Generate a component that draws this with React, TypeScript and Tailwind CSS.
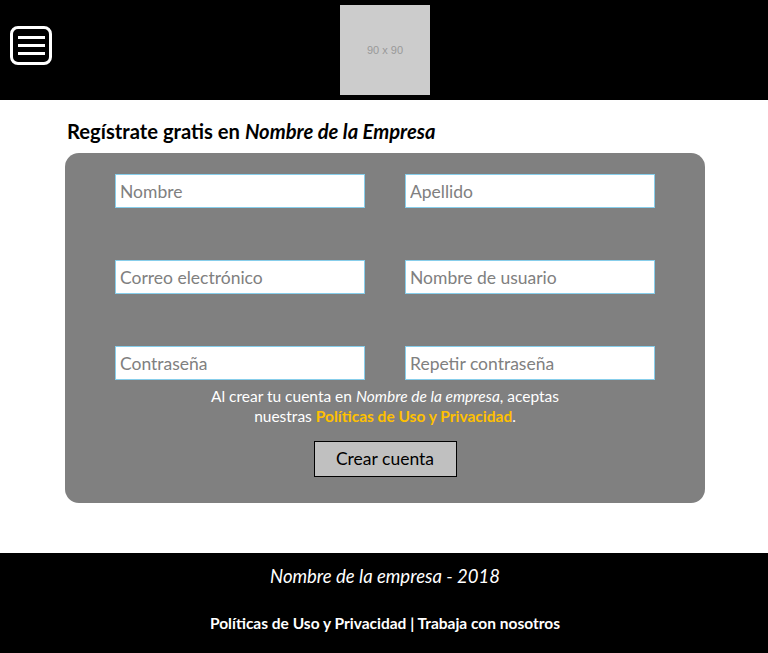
const fields = [
  ["Nombre", "Apellido"],
  ["Correo electrónico", "Nombre de usuario"],
  ["Contraseña", "Repetir contraseña"],
];

function MenuIcon() {
  return (
    <div className="flex h-[39px] w-[42px] flex-col items-center justify-center gap-[5px] rounded-[8px] border-[3px] border-white">
      <span className="block h-[3px] w-[27px] bg-white" />
      <span className="block h-[3px] w-[27px] bg-white" />
      <span className="block h-[3px] w-[27px] bg-white" />
    </div>
  );
}

export default function App() {
  return (
    <div className="min-h-[653px] bg-white font-['Lato',sans-serif]">
      {/* header */}
      <header className="relative flex h-[100px] items-center justify-center bg-black pl-[2px]">
        <div className="absolute left-[10px] top-[26px]">
          <MenuIcon />
        </div>
        <div className="flex h-[90px] w-[90px] items-center justify-center bg-[#cccccc] font-['Liberation_Sans',sans-serif] text-[11px] text-[#999999]">
          90 x 90
        </div>
      </header>

      {/* form */}
      <main className="pb-[50px] pl-[65px] pt-[19px]">
        <h1 className="mb-[10px] pl-[2px] text-[20.2px] font-bold leading-[24px] text-black">
          Regístrate gratis en <em>Nombre de la Empresa</em>
        </h1>
        <div className="flex w-[640px] flex-col items-center rounded-[14px] bg-[#808080] pb-[25px] pt-[21px]">
          <div className="grid grid-cols-2 gap-x-[40px] gap-y-[52px]">
            {fields.flat().map((f) => (
              <input
                key={f}
                placeholder={f}
                className="h-[34px] w-[250px] border border-[#87ceeb] bg-white px-[4px] text-[17.5px] text-black placeholder:text-[#808080] focus:outline-none"
              />
            ))}
          </div>
          <p className="mt-[6px] text-center text-[15.5px] leading-[20px] text-white">
            Al crear tu cuenta en <em>Nombre de la empresa</em>, aceptas
            <br />
            nuestras <span className="font-bold text-[#ffc000]">Políticas de Uso y Privacidad</span>.
          </p>
          <button className="mb-[1px] mt-[15px] h-[36px] w-[143px] border border-black bg-[#c0c0c0] text-[17.5px] text-black">
            Crear cuenta
          </button>
        </div>
      </main>

      {/* footer */}
      <footer className="flex h-[100px] flex-col items-center bg-black pl-[2px] pt-[12px] text-white">
        <p className="text-[18.5px] italic leading-[22px]">Nombre de la empresa - 2018</p>
        <p className="mt-[26px] text-[15.5px] font-bold leading-[20px]">
          Políticas de Uso y Privacidad | Trabaja con nosotros
        </p>
      </footer>
    </div>
  );
}
